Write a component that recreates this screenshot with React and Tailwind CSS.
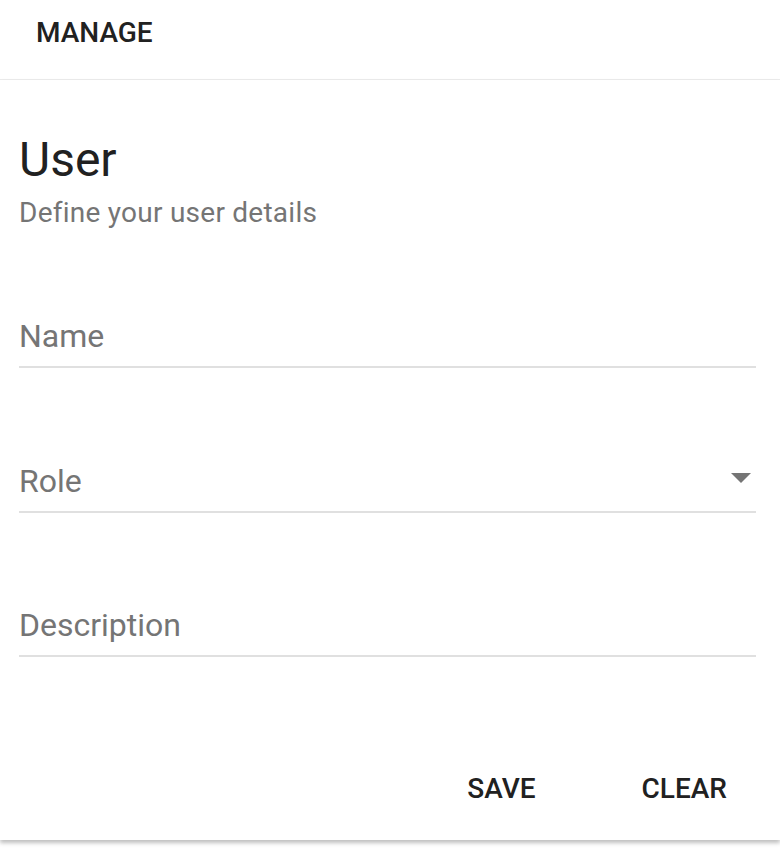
import React from 'react';

const Field = ({ label, select }) => (
  <div className="border-b-2 border-[#e0e0e0] pb-[14px] flex items-center justify-between">
    <span className="text-[32px] leading-[32px] text-[#757575]">{label}</span>
    {select && (
      <svg width="20" height="10" viewBox="0 0 20 10" className="mr-[5px] mt-[-6px]">
        <path d="M0 0 L20 0 L10 10 Z" fill="#757575" />
      </svg>
    )}
  </div>
);

const App = () => {
  return (
    <div className="min-h-screen bg-white font-['Roboto',sans-serif]">
      {/* Toolbar */}
      <header className="h-[80px] border-b border-[#ececec] pt-[19px] pl-[36px]">
        <span className="text-[28px] leading-[28px] font-medium text-[#212121]">MANAGE</span>
      </header>

      {/* Card */}
      <div className="bg-white shadow-[0_3px_4px_rgba(0,0,0,0.25)] pt-[56px] pb-[37px]">
        <div className="pl-[19px] pr-[24px]">
          <h1 className="text-[48px] leading-[48px] font-normal text-[#212121]">User</h1>
          <p className="mt-[15px] text-[28px] leading-[28px] tracking-[0.25px] text-[#757575]">Define your user details</p>

          <div className="mt-[93px]">
            <Field label="Name" />
          </div>
          <div className="mt-[97px]">
            <Field label="Role" select />
          </div>
          <div className="mt-[96px]">
            <Field label="Description" />
          </div>
        </div>

        <div className="mt-[118px] flex justify-end gap-[106px] pr-[53px]">
          <button className="text-[28px] leading-[28px] font-medium text-[#212121]">SAVE</button>
          <button className="text-[28px] leading-[28px] font-medium text-[#212121]">CLEAR</button>
        </div>
      </div>
    </div>
  );
};

export default App;
